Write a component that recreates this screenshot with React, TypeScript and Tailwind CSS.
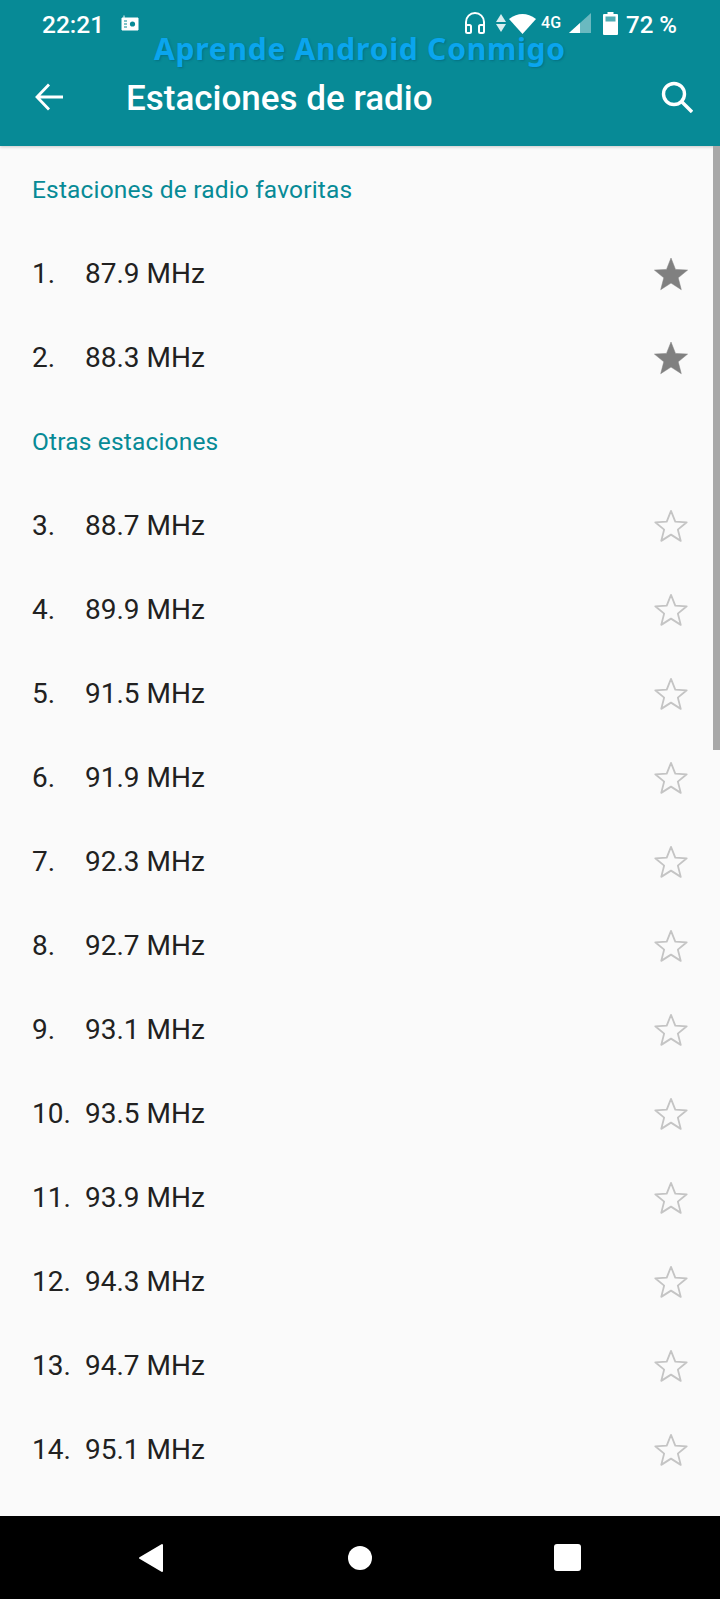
import React from "react";

const starPath =
  "M18 2 L22.5 13.4 L34.6 14.1 L25.2 21.8 L28.3 33.7 L18 27.1 L7.7 33.7 L10.8 21.8 L1.4 14.1 L13.5 13.4 Z";

const Star = ({ filled }: { filled: boolean }) => (
  <svg width="36" height="36" viewBox={filled ? "0 0 36 36" : "-1 -1 38 38"}>
    <path
      d={starPath}
      fill={filled ? "#808080" : "none"}
      stroke={filled ? "#808080" : "#c4c4c4"}
      strokeWidth={filled ? 0.5 : 1.9}
      strokeLinejoin="round"
    />
  </svg>
);

const Row = ({ n, f, filled }: { n: number; f: string; filled?: boolean }) => (
  <div className="flex h-[84px] items-center justify-between pl-8 pr-[31px] text-[28px] text-[#212121]">
    <div className="flex items-center">
      <span className="w-[53px]">{n}.</span>
      <span>{f} MHz</span>
    </div>
    <Star filled={!!filled} />
  </div>
);

const Heading = ({ children, cls }: { children: string; cls: string }) => (
  <div className={`pl-8 text-[24.5px] tracking-[0.17px] text-[#078a96] ${cls}`}>{children}</div>
);

const others = ["88.7", "89.9", "91.5", "91.9", "92.3", "92.7", "93.1", "93.5", "93.9", "94.3", "94.7", "95.1"];

export default function App() {
  return (
    <div className="relative flex h-[1599px] w-[720px] flex-col overflow-hidden bg-[#fafafa] font-['Roboto',sans-serif]">
      <header className="h-[146px] shrink-0 bg-[#078a96] text-white shadow-[0_1px_3px_rgba(0,0,0,0.2)]">
        <div className="flex h-[50px] items-center pl-[42px] pr-[43px]">
          <span className="text-[24.5px] font-medium">22:21</span>
          <svg className="-mt-1 ml-[17px]" width="18" height="16" viewBox="0 0 18 16">
            <path d="M3 0.5 L3 3 M1 3 H17 V15 H1 Z" fill="white" stroke="white" strokeWidth="1" />
            <circle cx="11.5" cy="9" r="2.6" fill="#078a96" />
            <path d="M3 6h3M3 9h3M3 12h3" stroke="#078a96" strokeWidth="1.2" />
          </svg>
          <div className="ml-auto flex items-center">
            <svg className="-mt-1" width="20" height="22" viewBox="0 0 20 22" fill="none">
              <path d="M1 17 V10 a9 9 0 0 1 18 0 V17" stroke="white" strokeWidth="2" />
              <rect x="1" y="13" width="5" height="8" rx="1.5" stroke="white" strokeWidth="2" />
              <rect x="14" y="13" width="5" height="8" rx="1.5" stroke="white" strokeWidth="2" />
            </svg>
            <svg className="-mt-1 ml-[11px]" width="10" height="18" viewBox="0 0 10 18">
              <path d="M5 0 L10 8 H0 Z M0 10 H10 L5 18 Z" fill="white" fillOpacity="0.85" />
            </svg>
            <svg className="-mt-1 ml-[3px]" width="27" height="21" viewBox="0 0 27 21">
              <path d="M0 6 Q13.5 -4 27 6 L13.5 21 Z" fill="white" />
            </svg>
            <span className="-mt-1 ml-[5px] text-[16px] font-medium">4G</span>
            <svg className="-mt-1 ml-[8px]" width="22" height="20" viewBox="0 0 22 20">
              <path d="M22 0 V20 H0 Z" fill="white" fillOpacity="0.4" />
              <path d="M11 10 V20 H0 Z" fill="white" />
            </svg>
            <svg className="-mt-1 ml-[12px]" width="15" height="23" viewBox="0 0 15 23">
              <path d="M4.5 0 H10.5 V2 H14 a1 1 0 0 1 1 1 V22 a1 1 0 0 1 -1 1 H1 a1 1 0 0 1 -1 -1 V3 a1 1 0 0 1 1 -1 H4.5 Z" fill="white" />
              <rect x="2.5" y="4.5" width="10" height="5" fill="#078a96" fillOpacity="0.7" />
            </svg>
            <span className="ml-[8px] text-[24px] font-medium">72 %</span>
          </div>
        </div>
        <div className="flex h-[94px] items-center pl-[35px] pr-[27px]">
          <svg width="28" height="28" viewBox="0 0 28 28" fill="none" stroke="white" strokeWidth="2.8">
            <path d="M28 14 H2 M14 1.5 L2 14 L14 26.5" />
          </svg>
          <span className="ml-[63px] pt-[2px] text-[35px] font-medium leading-none">Estaciones de radio</span>
          <svg className="ml-auto" width="32" height="32" viewBox="0 0 32 32" fill="none" stroke="white" strokeWidth="3.4">
            <circle cx="13" cy="13" r="10.5" />
            <path d="M20.5 20.5 L31 31" />
          </svg>
        </div>
      </header>

      <div className="absolute left-[154px] top-[29px] whitespace-nowrap font-['Noto_Sans',sans-serif] text-[30px] font-bold leading-[40px] tracking-[0.75px] text-[#0aa5ee] [text-shadow:1px_1px_2px_rgba(0,60,90,0.3)]">
        Aprende Android Conmigo
      </div>

      <main className="flex-1 overflow-hidden">
        <Heading cls="pt-[29px] leading-[30px]">Estaciones de radio favoritas</Heading>
        <div className="pt-[27px]">
          <Row n={1} f="87.9" filled />
          <Row n={2} f="88.3" filled />
        </div>
        <Heading cls="pt-[27px] leading-[30px]">Otras estaciones</Heading>
        <div className="pt-[27px]">
          {others.map((f, i) => (
            <Row key={f} n={i + 3} f={f} />
          ))}
        </div>
      </main>

      <div className="absolute right-0 top-[146px] h-[604px] w-[7px] bg-[#a8a8a8]" />

      <nav className="flex h-[83px] shrink-0 items-center bg-black">
        <svg className="ml-[137px]" width="28" height="30" viewBox="0 0 28 30">
          <path d="M25 2 V28 L3 15 Z" fill="white" stroke="white" strokeWidth="2" strokeLinejoin="round" />
        </svg>
        <div className="ml-[183px] h-6 w-6 rounded-full bg-white" />
        <div className="ml-[182px] h-[27px] w-[27px] rounded-[3px] bg-white" />
      </nav>
    </div>
  );
}
